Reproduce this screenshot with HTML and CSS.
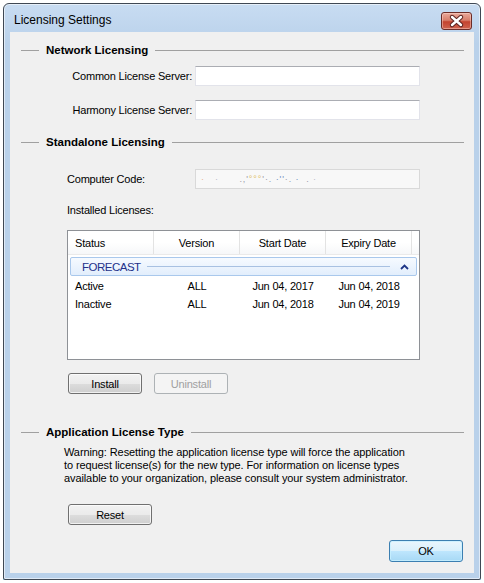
FILE: index.html
```html
<!DOCTYPE html>
<html>
<head>
<meta charset="utf-8">
<link rel="stylesheet" href="styles.css">
</head>
<body>
<div class="window">
  <div class="titlebar">
    <div class="title">Licensing Settings</div>
    <div class="close">
      <svg width="29" height="16" viewBox="0 0 29 16">
        <path d="M10 4 L19 12 M19 4 L10 12" stroke="#5b2320" stroke-width="4.4" stroke-linecap="round"/>
        <path d="M10 4 L19 12 M19 4 L10 12" stroke="#ffffff" stroke-width="2.4" stroke-linecap="round"/>
      </svg>
    </div>
  </div>
  <div class="client">
    <div class="sec sec1">Network Licensing</div>
    <div class="field-row row-common">
      <div class="lbl">Common License Server:</div>
      <div class="input"></div>
    </div>
    <div class="field-row row-harmony">
      <div class="lbl">Harmony License Server:</div>
      <div class="input"></div>
    </div>
    <div class="sec sec2">Standalone Licensing</div>
    <div class="code-row">
      <div class="code-lbl">Computer Code:</div>
      <div class="code-field"><span class="d1">·</span>&nbsp;&nbsp;&nbsp;<span class="d2">·</span>&nbsp;&nbsp;&nbsp;&nbsp;&nbsp;&nbsp;<span class="d3">.,'</span><span class="d4">°°°</span><span class="d3">'·.</span>&nbsp;<span class="d5">·''</span><span class="d3">·.</span>&nbsp;<span class="d5">·</span>&nbsp;&nbsp;<span class="d3">.</span>&nbsp;<span class="d2">·</span></div>
    </div>
    <div class="inst-lbl">Installed Licenses:</div>
    <div class="list">
      <div class="list-head">
        <div class="hc hc-left">Status</div>
        <div class="hc">Version</div>
        <div class="hc">Start Date</div>
        <div class="hc">Expiry Date</div>
        <div class="hc hc-fill"></div>
      </div>
      <div class="group">
        <span class="group-name">FORECAST</span>
        <span class="group-line"></span>
        <svg class="chev" width="9" height="6" viewBox="0 0 9 6"><path d="M1 5 L4.5 1.5 L8 5" fill="none" stroke="#1d3586" stroke-width="1.8"/></svg>
      </div>
      <div class="list-row">
        <div class="c c-left">Active</div>
        <div class="c">ALL</div>
        <div class="c">Jun 04, 2017</div>
        <div class="c">Jun 04, 2018</div>
      </div>
      <div class="list-row">
        <div class="c c-left">Inactive</div>
        <div class="c">ALL</div>
        <div class="c">Jun 04, 2018</div>
        <div class="c">Jun 04, 2019</div>
      </div>
    </div>
    <div class="btn-row">
      <button class="btn">Install</button>
      <button class="btn btn-disabled">Uninstall</button>
    </div>
    <div class="sec sec3">Application License Type</div>
    <div class="warning">Warning: Resetting the application license type will force the application<br>to request license(s) for the new type. For information on license types<br>available to your organization, please consult your system administrator.</div>
    <button class="btn btn-reset">Reset</button>
    <button class="btn btn-ok">OK</button>
  </div>
</div>
</body>
</html>
```

FILE: styles.css
```css
html, body {
  margin: 0;
  padding: 0;
  background: #ffffff;
}
body {
  font-family: "Liberation Sans", Arial, sans-serif;
  font-size: 11px;
  letter-spacing: -0.2px;
  color: #000;
}
.window {
  margin: 3px 0 0 3px;
  width: 478px;
  height: 577px;
  box-sizing: border-box;
  border: 1px solid #3f4854;
  border-radius: 6px 6px 2px 2px;
  background: linear-gradient(#c8dcf2, #b9d1ea 40px, #b9d1ea);
  padding: 0 6px 6px;
  display: flex;
  flex-direction: column;
  box-shadow: inset 0 0 0 1px rgba(255,255,255,0.55), 0 1px 0 #5ab6e0;
}
.titlebar {
  height: 28px;
  box-sizing: border-box;
  padding-top: 8px;
  display: flex;
  justify-content: space-between;
  align-items: flex-start;
}
.title {
  font-size: 12px;
  letter-spacing: 0;
  line-height: 14px;
  margin-top: 1px;
  padding-left: 4px;
  color: #000;
}
.close {
  width: 31px;
  height: 18px;
  box-sizing: border-box;
  margin-right: 2px;
  border: 1px solid #6b2c27;
  border-radius: 3px;
  background: linear-gradient(#e9a99b 0%, #d77f6c 45%, #c3432f 55%, #cf6450 100%);
  box-shadow: inset 0 0 0 1px rgba(255,220,210,0.45);
  display: flex;
  align-items: center;
  justify-content: center;
}
.client {
  height: 541px;
  background: #f0f0f0;
  display: flex;
  flex-direction: column;
}
.sec {
  display: flex;
  align-items: center;
  gap: 7px;
  padding: 0 10px 0 11px;
  height: 14px;
  font-weight: bold;
  font-size: 11.5px;
  letter-spacing: 0;
  color: #000;
}
.sec::before {
  content: "";
  width: 18px;
  border-top: 1px solid #a0a0a0;
}
.sec::after {
  content: "";
  flex: 1;
  border-top: 1px solid #a0a0a0;
}
.sec1 { margin-top: 11px; }
.sec2 { margin-top: 15px; }
.sec3 { margin-top: 31px; }
.field-row {
  display: flex;
  align-items: center;
  gap: 3px;
  height: 20px;
}
.row-common { margin-top: 9px; }
.row-harmony { margin-top: 14px; }
.lbl {
  width: 182px;
  text-align: right;
}
.input {
  width: 225px;
  height: 20px;
  box-sizing: border-box;
  border: 1px solid #e2e3ea;
  border-top-color: #abadb3;
  background: #fff;
}
.code-row {
  margin-top: 20px;
  padding-left: 57px;
  display: flex;
  align-items: center;
  height: 20px;
}
.code-lbl { width: 128px; }
.code-field {
  width: 225px;
  height: 20px;
  box-sizing: border-box;
  border: 1px solid #d9d9d9;
  background: #f8f8f8;
  padding-left: 5px;
  font-size: 9px;
  line-height: 18px;
  letter-spacing: 0.9px;
  white-space: nowrap;
  overflow: hidden;
}
.d1 { color: #e8b090; }
.d2 { color: #b8b8c8; }
.d3 { color: #9a9aa8; }
.d4 { color: #e0c060; }
.d5 { color: #7090c0; }
.inst-lbl {
  margin-top: 14px;
  padding-left: 57px;
  line-height: 14px;
}
.list {
  margin-top: 13px;
  margin-left: 57px;
  width: 353px;
  height: 130px;
  box-sizing: border-box;
  border: 1px solid #8e9196;
  background: #fff;
  display: flex;
  flex-direction: column;
}
.list-head {
  display: grid;
  grid-template-columns: 86px 86px 86px 86px 1fr;
  height: 24px;
  box-sizing: border-box;
  border-bottom: 1px solid #eaeaea;
  background: linear-gradient(#ffffff, #ffffff 50%, #f6f7f9);
}
.hc {
  border-right: 1px solid #e3e3e3;
  text-align: center;
  line-height: 21px;
  padding-top: 2px;
}
.hc-left {
  text-align: left;
  padding-left: 7px;
}
.hc-fill { border-right: none; }
.group {
  margin: 2px 2px 0;
  height: 19px;
  box-sizing: border-box;
  border: 1px solid #a9c8ec;
  border-radius: 2px;
  background: linear-gradient(#f6faff, #e2eefc);
  display: flex;
  align-items: center;
  padding-left: 11px;
}
.group-name {
  color: #24318a;
  font-size: 11.5px;
  letter-spacing: -0.5px;
}
.group-line {
  flex: 1;
  border-top: 1px solid #a8c1e2;
  margin: 0 10px 0 6px;
}
.chev {
  margin-right: 7px;
}
.list-row {
  display: grid;
  grid-template-columns: 86px 86px 86px 86px;
  height: 18px;
  line-height: 18px;
}
.group + .list-row { margin-top: 1px; }
.c { text-align: center; }
.c-left {
  text-align: left;
  padding-left: 7px;
}
.btn-row {
  margin-top: 13px;
  padding-left: 58px;
  display: flex;
  gap: 12px;
}
.btn {
  width: 74px;
  height: 21px;
  box-sizing: border-box;
  border: 1px solid #707070;
  border-radius: 3px;
  background: linear-gradient(#f2f2f2 0%, #ebebeb 50%, #dddddd 51%, #cfcfcf 100%);
  box-shadow: inset 0 0 0 1px rgba(255,255,255,0.7);
  font-family: inherit;
  font-size: 11px;
  letter-spacing: -0.2px;
  color: #000;
  padding: 0;
  display: flex;
  align-items: center;
  justify-content: center;
}
.btn-disabled {
  border-color: #adb2b5;
  background: #f4f4f4;
  box-shadow: none;
  color: #a0a0a0;
}
.warning {
  margin-top: 7px;
  padding-left: 54px;
  line-height: 13px;
  letter-spacing: -0.1px;
}
.btn-reset {
  margin-top: 19px;
  margin-left: 58px;
  width: 84px;
}
.btn-ok {
  margin-top: 15px;
  align-self: flex-end;
  margin-right: 11px;
  height: 22px;
  border-color: #3c7fb1;
  background: linear-gradient(#eaf6fd 0%, #d9f0fc 50%, #bee6fd 51%, #a7d9f5 100%);
  box-shadow: inset 0 0 0 1px rgba(200,240,255,0.8);
}
```
